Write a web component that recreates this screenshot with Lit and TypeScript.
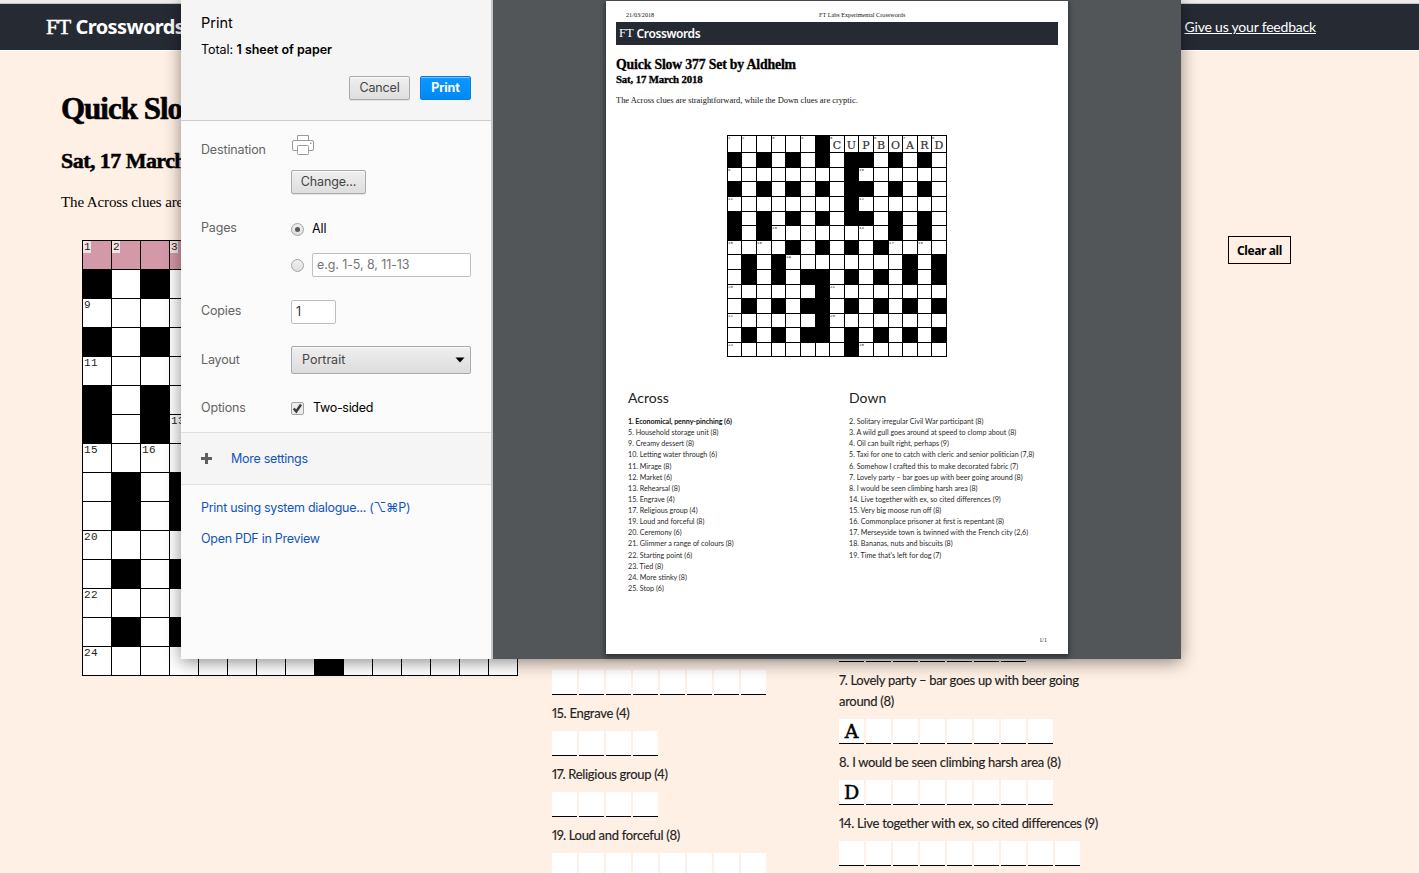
import { LitElement, html, css } from "lit";
import { customElement, property } from "lit/decorators.js";
import { classMap } from "lit/directives/class-map.js";

const GRID = [
  "......#........",
  "#.#.#.#.##.#.#.",
  "........#......",
  "#.#.#.#.##.#.#.",
  "........#......",
  "#.#.#.#.##.#.#.",
  "#.#........#.#.",
  "....#.#.#.#....",
  ".#.#........#.#",
  ".#.#.##.#.#.#.#",
  "......#........",
  ".#.#.##.#.#.#.#",
  "......#........",
  ".#.#.##.#.#.#.#",
  "........#......",
];

const NUMBERS: Record<string, number> = {
  "0,0": 1, "0,1": 2, "0,3": 3, "0,5": 4, "0,7": 5, "0,10": 6, "0,12": 7, "0,14": 8,
  "2,0": 9, "2,9": 10, "4,0": 11, "4,9": 12, "6,3": 13, "6,9": 14,
  "7,0": 15, "7,2": 16, "7,11": 17, "7,13": 18, "8,4": 19,
  "10,0": 20, "10,7": 21, "12,0": 22, "12,7": 23, "14,0": 24, "14,9": 25,
};

const ANSWER = "CUPBOARD";

const ACROSS = [
  "1. Economical, penny-pinching (6)",
  "5. Household storage unit (8)",
  "9. Creamy dessert (8)",
  "10. Letting water through (6)",
  "11. Mirage (8)",
  "12. Market (6)",
  "13. Rehearsal (8)",
  "15. Engrave (4)",
  "17. Religious group (4)",
  "19. Loud and forceful (8)",
  "20. Ceremony (6)",
  "21. Glimmer a range of colours (8)",
  "22. Starting point (6)",
  "23. Tied (8)",
  "24. More stinky (8)",
  "25. Stop (6)",
];

const DOWN = [
  "2. Solitary irregular Civil War participant (8)",
  "3. A wild gull goes around at speed to clomp about (8)",
  "4. Oil can built right, perhaps (9)",
  "5. Taxi for one to catch with cleric and senior politician (7,8)",
  "6. Somehow I crafted this to make decorated fabric (7)",
  "7. Lovely party – bar goes up with beer going around (8)",
  "8. I would be seen climbing harsh area (8)",
  "14. Live together with ex, so cited differences (9)",
  "15. Very big moose run off (8)",
  "16. Commonplace prisoner at first is repentant (8)",
  "17. Merseyside town is twinned with the French city (2,6)",
  "18. Bananas, nuts and biscuits (8)",
  "19. Time that's left for dog (7)",
];

@customElement("crossword-grid")
class CrosswordGrid extends LitElement {
  @property({ type: Boolean, reflect: true }) print = false;

  static styles = css`
    :host { display: block; }
    .grid {
      display: grid;
      box-sizing: border-box;
      width: 436px;
      height: 436px;
      grid-template-columns: repeat(15, 28px);
      grid-template-rows: repeat(15, 28px);
      gap: 1px;
      padding: 1px;
      background: #000;
      font-family: "Liberation Mono", monospace;
    }
    .cell { background: #fff; overflow: hidden; display: flex; }
    .block { background: #000; }
    .active { background: #d499a8; }
    .num {
      font-size: 11px;
      line-height: 12px;
      height: 12px;
      padding: 0 0 0 1px;
      color: #222;
      letter-spacing: 0.4px;
    }
    .active .num { background: #f3e4e4; }
    :host([print]) .grid {
      width: 220px;
      height: 222px;
      grid-template-columns: 13px 14px 14px 13px 14px 14px 13px 14px 13px 14px 14px 13px 14px 13px 14px;
      grid-template-rows: 16px 14px 13px 14px 14px 13px 14px 13px 14px 14px 13px 14px 13px 14px 13px;
    }
    :host([print]) .cell { display: block; position: relative; overflow: visible; }
    :host([print]) .num {
      position: absolute;
      left: 0;
      top: 0;
      padding: 0;
      font-size: 4px;
      line-height: 4px;
      height: 4px;
      letter-spacing: 0;
      color: #222;
    }
    .letter {
      display: block;
      text-align: center;
      font-family: "DejaVu Serif", serif;
      font-size: 11px;
      line-height: 19px;
      color: #333;
      -webkit-text-stroke: 0.2px #333;
    }
  `;

  render() {
    return html`<div class="grid">
      ${GRID.map((row, r) =>
        [...row].map((ch, c) => {
          const n = NUMBERS[`${r},${c}`];
          const classes = {
            cell: true,
            block: ch === "#",
            active: !this.print && r === 0 && c < 6,
          };
          const letter = this.print && r === 0 && c >= 7 ? ANSWER[c - 7] : "";
          return html`<div class=${classMap(classes)}>${n ? html`<span class="num">${n}</span>` : ""}${letter
            ? html`<span class="letter">${letter}</span>`
            : ""}</div>`;
        })
      )}
    </div>`;
  }
}

@customElement("clue-entry")
class ClueEntry extends LitElement {
  @property() text = "";
  @property({ type: Number }) cells = 0;
  @property() letter = "";

  static styles = css`
    :host { display: block; margin-bottom: 8px; }
    .text {
      margin: 0 0 7px;
      font: 13px/21px "Lato", sans-serif;
      font-variant-numeric: proportional-nums;
      letter-spacing: -0.3px;
      color: #222;
      -webkit-text-stroke: 0.15px #222;
    }
    .cells { display: flex; gap: 2px; }
    .box {
      width: 25px;
      height: 24px;
      background: #fff;
      border-bottom: 1px solid #000;
      font: 19px/25px "DejaVu Serif", serif;
      text-align: center;
      color: #000;
      -webkit-text-stroke: 0.5px #000;
    }
  `;

  render() {
    return html`${this.text ? html`<p class="text">${this.text}</p>` : ""}
      <div class="cells">
        ${Array.from({ length: this.cells }, (_, i) => html`<div class="box">${i === 0 ? this.letter : ""}</div>`)}
      </div>`;
  }
}

@customElement("print-sheet")
class PrintSheet extends LitElement {
  static styles = css`
    :host {
      display: flex;
      flex-direction: column;
      box-sizing: border-box;
      width: 462px;
      height: 653px;
      padding: 10px 10px 0;
      background: #fff;
      box-shadow: 0 2px 5px 1px rgba(0, 0, 0, 0.45);
      color: #000;
    }
    .meta {
      display: grid;
      grid-template-columns: 193px auto;
      padding: 0 10px;
      font: 6.2px/8px "Liberation Serif", serif;
      height: 11px;
      color: #111;
    }
    .brand {
      display: flex;
      align-items: center;
      gap: 3px;
      height: 23px;
      padding-left: 3px;
      background: #262a33;
      color: #fff;
      font: 600 12px/23px "Noto Sans", sans-serif;
    }
    .name { letter-spacing: -0.4px; }
    .ft { font: 12.5px/23px "Liberation Serif", serif; }
    h1 {
      margin: 12px 0 0;
      font: bold 13.8px/16px "Liberation Serif", serif;
      letter-spacing: -0.18px;
      -webkit-text-stroke: 0.3px #000;
    }
    h2 {
      margin: 0;
      font: bold 10.8px/12px "Liberation Serif", serif;
      letter-spacing: -0.15px;
      -webkit-text-stroke: 0.3px #000;
    }
    .intro { margin: 9px 0 0; font: 8.45px/12px "Liberation Serif", serif; color: #111; }
    .puzzle { margin: 29px 0 0 111px; }
    .clues { display: grid; grid-template-columns: 221px 1fr; margin: 31px 0 0 12px; }
    h3 { margin: 0 0 8px; font: 14px/20px "Lato", sans-serif; color: #222; }
    ol { margin: 0; padding: 0; list-style: none; font: 7.15px/11.13px "Lato", sans-serif; color: #2a2a2a; }
    .current { font-weight: bold; color: #111; letter-spacing: -0.07px; }
    .page { margin: auto 21px 9px; margin-right: 11px; text-align: right; font: 6px/10px "Liberation Serif", serif; color: #222; }
  `;

  list(title: string, clues: string[], current = -1) {
    return html`<section>
      <h3>${title}</h3>
      <ol>
        ${clues.map((t, i) => html`<li class=${classMap({ current: i === current })}>${t}</li>`)}
      </ol>
    </section>`;
  }

  render() {
    return html`
      <div class="meta"><span>21/03/2018</span><span>FT Labs Experimental Crosswords</span></div>
      <div class="brand"><span class="ft">FT</span><span class="name">Crosswords</span></div>
      <h1>Quick Slow 377 Set by Aldhelm</h1>
      <h2>Sat, 17 March 2018</h2>
      <p class="intro">The Across clues are straightforward, while the Down clues are cryptic.</p>
      <crossword-grid class="puzzle" print></crossword-grid>
      <div class="clues">${this.list("Across", ACROSS, 0)}${this.list("Down", DOWN)}</div>
      <div class="page">1/1</div>
    `;
  }
}

@customElement("print-dialog")
class PrintDialog extends LitElement {
  static styles = css`
    :host {
      display: grid;
      grid-template-columns: 312px 1fr;
      width: 1000px;
      height: 659px;
      background: #525659;
      box-shadow: 0 3px 16px rgba(0, 0, 0, 0.45);
      font: 12.5px/18px "Inter", sans-serif;
      color: #000;
    }
    .side {
      display: flex;
      flex-direction: column;
      box-sizing: border-box;
      background: #fbfbfb;
      border-right: 2px solid #c6c6c6;
    }
    .head {
      box-sizing: border-box;
      height: 121px;
      padding: 13px 20px 0;
      background: #f5f5f5;
      border-bottom: 1px solid #cdcdcd;
    }
    .title { font-size: 14.5px; line-height: 20px; }
    .total { margin-top: 8px; letter-spacing: -0.05px; }
    .total b { font-weight: 600; }
    .actions { display: flex; justify-content: flex-end; gap: 10px; margin-top: 17px; }
    .btn {
      box-sizing: border-box;
      height: 24px;
      border: 1px solid #a9a9a9;
      border-radius: 2px;
      background: linear-gradient(#efefef, #dedede);
      color: #444;
      text-align: center;
      line-height: 22px;
      letter-spacing: -0.15px;
      box-shadow: 0 1px 0 rgba(0, 0, 0, 0.08), inset 0 1px 1px rgba(255, 255, 255, 0.8);
    }
    .cancel { width: 61px; }
    .go {
      width: 51px;
      border-color: #0a7be0;
      background: linear-gradient(#0d98ff, #0089f2);
      color: #fff;
      font-weight: 700;
      box-shadow: inset 0 1px 1px rgba(255, 255, 255, 0.45);
    }
    .row { display: grid; grid-template-columns: 90px 180px; padding-left: 20px; align-items: start; }
    .label { color: #646464; letter-spacing: -0.15px; }
    .destination { padding-top: 14px; height: 65px; }
    .destination .label { padding-top: 6px; }
    .printer { display: block; margin-bottom: 13px; }
    .change { width: 75px; }
    .pages { padding-top: 19px; height: 64px; }
    .choice { display: flex; align-items: center; gap: 8px; height: 18px; margin-top: 1px; letter-spacing: -0.1px; }
    .choice + .choice { height: 24px; margin-top: 15px; }
    .radio {
      box-sizing: border-box;
      display: flex;
      align-items: center;
      justify-content: center;
      width: 13px;
      height: 13px;
      border: 1px solid #a3a3a3;
      border-radius: 50%;
      background: linear-gradient(#f0f0f0, #dedede);
    }
    .radio.on::after { content: ""; width: 5px; height: 5px; border-radius: 50%; background: #5a5a5a; }
    .field {
      box-sizing: border-box;
      height: 24px;
      padding-left: 4px;
      border: 1px solid #bfbfbf;
      border-radius: 2px;
      background: #fff;
      line-height: 22px;
      color: #757575;
    }
    .range { flex: 1; }
    .copies { padding-top: 17px; height: 29px; }
    .copies .label { padding-top: 2px; }
    .count { width: 45px; color: #333; }
    .layout { padding-top: 17px; height: 31px; }
    .layout .label { padding-top: 5px; }
    .select {
      box-sizing: border-box;
      display: flex;
      align-items: center;
      justify-content: space-between;
      height: 28px;
      padding: 0 5px 0 10px;
      border: 1px solid #a9a9a9;
      border-radius: 2px;
      background: linear-gradient(#efefef, #dcdcdc);
      box-shadow: inset 0 1px 1px rgba(255, 255, 255, 0.75);
      color: #444;
    }
    .options { padding-top: 22px; height: 33px; }
    .options .choice { margin-top: 0; letter-spacing: -0.3px; gap: 9px; }
    .more {
      display: flex;
      align-items: center;
      gap: 19px;
      height: 51px;
      padding-left: 20px;
      background: #f5f5f5;
      border: solid #e0e0e0;
      border-width: 1px 0;
    }
    .link { color: #1155bb; letter-spacing: -0.29px; }
    .links { display: flex; flex-direction: column; gap: 13px; padding: 14px 20px; }
    .preview { display: flex; justify-content: center; padding: 1px 0 0; }
  `;

  render() {
    return html`
      <div class="side">
        <div class="head">
          <div class="title">Print</div>
          <div class="total">Total: <b>1 sheet of paper</b></div>
          <div class="actions">
            <div class="btn cancel">Cancel</div>
            <div class="btn go">Print</div>
          </div>
        </div>
        <div class="row destination">
          <div class="label">Destination</div>
          <div>
            <svg class="printer" width="24" height="22" viewBox="0 0 24 22" fill="#fff" stroke="#9a9a9a" stroke-width="1">
              <path d="M6.500 5.500v-5h11v5" />
              <path d="M6.500 15.500H3a1.500 1.500 0 0 1-1.500-1.500V7A1.500 1.500 0 0 1 3 5.500h18A1.500 1.500 0 0 1 22.500 7v7a1.500 1.500 0 0 1-1.500 1.500h-3.500" />
              <rect x="6.500" y="10.500" width="11" height="9" rx="1" />
              <rect x="19" y="7.500" width="1.500" height="1.500" fill="#999" stroke="none" />
            </svg>
            <div class="btn change">Change...</div>
          </div>
        </div>
        <div class="row pages">
          <div class="label">Pages</div>
          <div>
            <div class="choice"><span class="radio on"></span><span>All</span></div>
            <div class="choice"><span class="radio"></span><div class="field range">e.g. 1-5, 8, 11-13</div></div>
          </div>
        </div>
        <div class="row copies">
          <div class="label">Copies</div>
          <div class="field count">1</div>
        </div>
        <div class="row layout">
          <div class="label">Layout</div>
          <div class="select">
            <span>Portrait</span>
            <svg width="10" height="6" viewBox="0 0 10 6"><path d="M0.500 0.500h9L5 5.500z" fill="#000" /></svg>
          </div>
        </div>
        <div class="row options">
          <div class="label">Options</div>
          <div class="choice">
            <svg width="13" height="13" viewBox="0 0 13 13">
              <rect x="0.500" y="0.500" width="12" height="12" rx="1.500" fill="#ececec" stroke="#a3a3a3" />
              <path d="M2.700 6.500l2.600 3 4.700-7" fill="none" stroke="#3c3c3c" stroke-width="2.400" />
            </svg>
            <span>Two-sided</span>
          </div>
        </div>
        <div class="more">
          <svg width="11" height="11" viewBox="0 0 11 11"><path d="M4 0h3v4h4v3H7v4H4V7H0V4h4z" fill="#5f5f5f" /></svg>
          <span class="link">More settings</span>
        </div>
        <div class="links">
          <span class="link">Print using system dialogue... (⌥⌘P)</span>
          <span class="link">Open PDF in Preview</span>
        </div>
      </div>
      <div class="preview"><print-sheet></print-sheet></div>
    `;
  }
}

@customElement("app-root")
class AppRoot extends LitElement {
  static styles = css`
    :host {
      display: block;
      position: relative;
      width: 1419px;
      height: 873px;
      overflow: hidden;
      background: #fff0e5;
      color: #000;
    }
    .strip { box-sizing: border-box; height: 4px; background: #ececec; border-bottom: 1px solid #c9c4c0; }
    header {
      display: flex;
      justify-content: space-between;
      align-items: center;
      height: 46px;
      padding: 0 103px 0 46px;
      background: #262a33;
      border-bottom: 1px solid #fff;
      color: #fff;
    }
    .brand { display: flex; gap: 5px; font: bold 20px/46px "Noto Sans", sans-serif; letter-spacing: -0.6px; }
    .ft { font: 22px/46px "Liberation Serif", serif; -webkit-text-stroke: 0.5px #fff; }
    .feedback { font: 14px/20px "Lato", sans-serif; letter-spacing: -0.2px; text-decoration: underline; }
    main { display: grid; grid-template-columns: 491px 287px 389px 1fr; padding-left: 61px; }
    h1 {
      margin: 39px 0 0;
      font: bold 31px/38px "Liberation Serif", serif;
      letter-spacing: -1px;
      -webkit-text-stroke: 0.6px #000;
      white-space: nowrap;
    }
    h2 {
      margin: 20px 0 0;
      font: bold 22px/26px "Liberation Serif", serif;
      letter-spacing: -0.55px;
      -webkit-text-stroke: 0.5px #000;
    }
    .intro { margin: 18px 0 0; font: 15px/20px "Liberation Serif", serif; letter-spacing: -0.12px; }
    .board { margin: 28px 0 0 21px; }
    .across { padding-top: 619px; }
    .down { padding-top: 586px; }
    .lower { width: 270px; }
    .clear {
      box-sizing: border-box;
      width: 63px;
      height: 28px;
      margin-top: 185px;
      border: 1px solid #000;
      text-align: center;
      font: bold 12px/27px "Noto Sans", sans-serif;
      letter-spacing: -0.4px;
    }
    .dialog { position: absolute; left: 181px; top: 0; }
  `;

  render() {
    return html`
      <div class="strip"></div>
      <header>
        <div class="brand"><span class="ft">FT</span><span>Crosswords</span></div>
        <span class="feedback">Give us your feedback</span>
      </header>
      <main>
        <section>
          <h1>Quick Slow 377</h1>
          <h2>Sat, 17 March 2018</h2>
          <p class="intro">The Across clues are straightforward, while the Down clues are cryptic.</p>
          <crossword-grid class="board"></crossword-grid>
        </section>
        <section class="across lower">
          <clue-entry cells="8"></clue-entry>
          <clue-entry text="15. Engrave (4)" cells="4"></clue-entry>
          <clue-entry text="17. Religious group (4)" cells="4"></clue-entry>
          <clue-entry text="19. Loud and forceful (8)" cells="8"></clue-entry>
        </section>
        <section class="down lower">
          <clue-entry cells="7"></clue-entry>
          <clue-entry text="7. Lovely party – bar goes up with beer going around (8)" cells="8" letter="A"></clue-entry>
          <clue-entry text="8. I would be seen climbing harsh area (8)" cells="8" letter="D"></clue-entry>
          <clue-entry text="14. Live together with ex, so cited differences (9)" cells="9"></clue-entry>
        </section>
        <div class="clear">Clear all</div>
      </main>
      <print-dialog class="dialog"></print-dialog>
    `;
  }
}
